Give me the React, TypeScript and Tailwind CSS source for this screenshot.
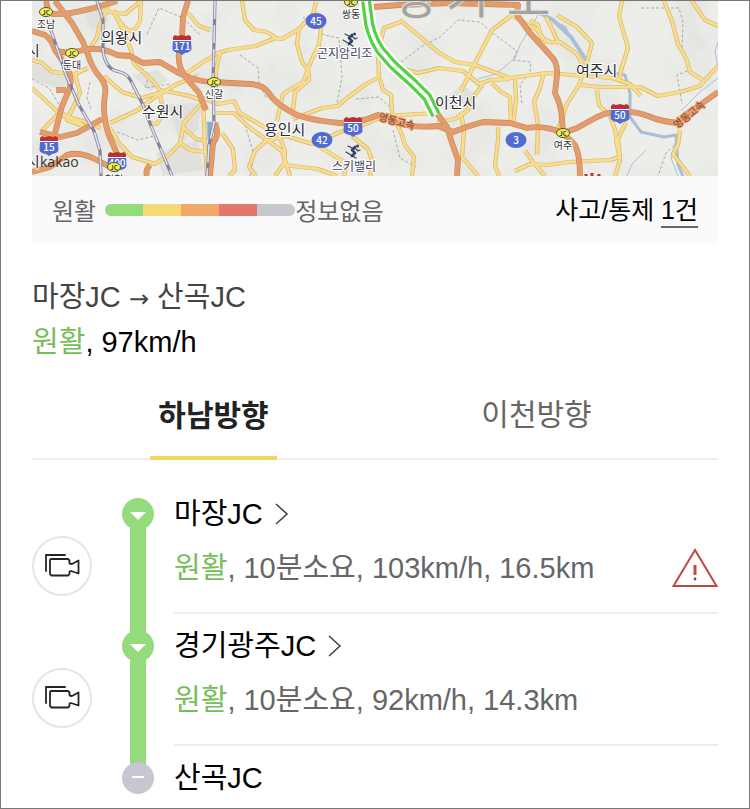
import React from "react";

const HIGHWAYS = [
  "M32 31L45 35Q52 40 55 50L67 67Q73 80 69 90L62 106L55 133",
  "M55 1L72 23L83 42L88 55Q92 68 100 77Q107 85 105 95Q102 112 108 133L118 156",
  "M46 1L49 13Q60 17 97 7L117 1",
  "M55 50Q66 55 83 50Q100 46 117 55L130 56L143 63L160 62L177 72L190 78Q203 82 213 82L250 84Q263 85 268 92Q275 104 297 115Q315 121 340 123Q360 123 378 115Q388 117 397 123Q413 128 438 126L453 132Q468 126 483 122L510 123L527 128Q545 125 563 133L577 128L597 117Q610 111 620 112Q636 111 648 116Q662 122 680 123Q690 110 697 107L718 92",
  "M188 1L183 17L182 37L179 53Q177 67 188 80L199 93L206 110",
  "M56 90L66 90",
  "M40 132L60 137L77 133L102 119",
  "M32 172L50 167L67 155Q80 151 97 160L112 168",
  "M373 7L400 5L450 3L518 5L517 15L530 33L550 55Q558 62 557 75L555 93Q561 105 562 118L563 133L575 145Q580 155 580 176",
  "M436 112L447 127L452 143L458 160L457 176",
  "M215 123Q220 135 213 143L210 176",
  "M150 165Q145 170 147 176",
];

const ROADS = [
  "M109 1L107 10Q98 25 97 38L91 46",
  "M113 10L122 28L131 50L134 64L152 80L160 90L190 96L203 101",
  "M141 1L140 20Q136 33 128 30Q122 26 117 17",
  "M97 10L125 14L141 1",
  "M88 68L75 74L52 72L42 63L32 60",
  "M75 74L80 93L67 120L88 128",
  "M32 88L43 98L62 116L83 121L101 128",
  "M88 128L60 112L41 132",
  "M104 76L122 92L142 98L162 92",
  "M110 123L138 110L155 97L177 84L198 76",
  "M159 92L164 112L157 124L149 123",
  "M110 128L119 143L132 157L155 164L170 154L180 143L184 123L203 101",
  "M203 101L205 145L207 176",
  "M203 98L218 104L234 101L240 113L266 128",
  "M216 113L234 113L250 128L267 140L282 151L290 176",
  "M222 133L233 149L235 170L229 176",
  "M187 73L203 62L218 53L228 50L256 46L275 38L282 39L299 29L313 14L316 2",
  "M242 1L245 20L254 30L267 32L278 39",
  "M188 13L199 26L210 30",
  "M220 53L216 70L216 80",
  "M299 27L297 44L302 62L308 70L303 82L283 94L280 107L277 121",
  "M316 12L321 28L319 45L313 57L308 68L309 80L295 92L293 110",
  "M293 119L322 108L338 106L347 98L366 84L379 77L378 53L384 28L403 21",
  "M263 142L286 136L312 144L340 132L360 126L385 116L436 113",
  "M314 143L336 157L346 163L344 176",
  "M278 133L285 151L284 163L275 176",
  "M284 165L318 169L337 176",
  "M352 136L368 149L373 163L370 176",
  "M268 139L255 151L249 167L256 176",
  "M179 142L190 150L205 152",
  "M184 128L196 139L206 141",
  "M400 20L418 35L438 52L455 62L475 65L510 78L547 73L612 78L630 84L641 96",
  "M380 79L383 90L391 95L392 113L402 135L405 145L414 157L412 176",
  "M401 68L418 73L439 68L463 71L479 84L490 80L510 79",
  "M512 15L492 30L478 57L473 67L461 91",
  "M461 112L464 130L462 157L478 176",
  "M437 122L455 119L468 110L474 96L483 84",
  "M492 83L501 92L510 97L511 126",
  "M515 79L516 100L513 125",
  "M514 17L537 30L546 42L560 42L577 54L584 67",
  "M546 17L553 31L559 44",
  "M557 15L577 27L592 43L587 62L579 85L567 104L558 129",
  "M530 20L538 25L541 38L553 43",
  "M581 85L600 87L640 87L658 96L680 92L700 86L706 79L718 66",
  "M597 90L599 105L610 116L615 129L617 145L620 160L615 176",
  "M622 1L619 16L628 48L622 67L619 80",
  "M664 1L672 21L678 44L686 58L690 72L703 80",
  "M692 1L705 20L718 26",
  "M626 122L618 139L620 157L610 160L569 162L548 165L530 164L515 171",
  "M680 130L678 145L673 154L690 176",
  "M525 151L533 162L545 176",
  "M498 127L498 140L495 165L499 176",
  "M544 72L540 88L534 101L538 125L537 155",
];

const RAILS = [
  "M97 1L103 20L103 50Q105 70 120 72Q128 74 132 83L143 105L151 126L172 176",
  "M48 22L55 42L66 75L79 105L94 131L100 151L101 176",
  "M215 1L213 82L214 123L209 145L207 176",
];

const BORDERS = [
  "M32 79L49 88L60 106M90 82L87 98L92 111",
  "M147 34L159 8L183 18L200 35M138 65L149 75L145 88L170 84",
  "M240 55L258 68L259 82L266 98M245 125L254 155L250 176",
  "M303 17L324 35L339 38L342 77L336 108",
  "M356 99L379 97L391 108M393 130L400 158L416 167",
  "M401 62L421 47L440 37L458 20L480 22L491 32L517 51L513 60L531 62L530 72L520 85L522 105",
  "M641 8L679 8L683 22L682 50L690 70L677 75L682 104",
  "M678 142L666 153L658 176M117 132L138 140L154 136",
];

function Junction({ x, y, label }: { x: number; y: number; label: string }) {
  return (
    <g textAnchor="middle">
      <ellipse cx={x} cy={y} rx="6.5" ry="4.5" fill="#f2ef55" stroke="#504e35" />
      <text x={x} y={y + 2.5} fontSize="6" fontWeight="700" fill="#33322b">JC</text>
      <text x={x} y={y + 16} fontSize="10" fill="#303038" stroke="#fff" strokeWidth="2" paintOrder="stroke">{label}</text>
    </g>
  );
}

function Shield({ x, y, label }: { x: number; y: number; label: string }) {
  return (
    <g>
      <path d={`M${x - 9} ${y - 5}H${x + 9}L${x + 9.5} ${y + 4}Q${x + 9} ${y + 7} ${x + 3} ${y + 8}L${x} ${y + 10}L${x - 3} ${y + 8}Q${x - 9} ${y + 7} ${x - 9.5} ${y + 4}Z`} fill="#526bd0" />
      <path d={`M${x - 9} ${y - 5}V${y - 8}L${x - 7} ${y - 10}L${x - 4} ${y - 9}L${x} ${y - 10}L${x + 4} ${y - 9}L${x + 7} ${y - 10}L${x + 9} ${y - 8}V${y - 5}Z`} fill="#bd3030" />
      <path d={`M${x - 9} ${y - 4.5}H${x + 9}`} stroke="#fff" />
      <text x={x} y={y + 5} textAnchor="middle" fontSize="10" fontWeight="500" fill="#fff">{label}</text>
    </g>
  );
}

function Oval({ x, y, label }: { x: number; y: number; label: string }) {
  return (
    <g>
      <ellipse cx={x} cy={y} rx="10.5" ry="8" fill="#526bd0" />
      <text x={x} y={y + 3.5} textAnchor="middle" fontSize="10" fontWeight="500" fill="#fff">{label}</text>
    </g>
  );
}

function Skier({ x, y }: { x: number; y: number }) {
  return (
    <g transform={`translate(${x} ${y})`} stroke="#354260" fill="none" strokeLinecap="round" strokeLinejoin="round">
      <circle cx="4.5" cy="-5" r="1.5" fill="#354260" stroke="none" />
      <path d="M2 -4L-1 -1L2 2L-1 5" strokeWidth="2.6" />
      <path d="M2 -3L5 0L7 -1M-1 -3L-5 -5" strokeWidth="1.2" />
      <path d="M-7 1L3 7" strokeWidth="1.2" />
    </g>
  );
}

function TrafficMap() {
  return (
    <svg viewBox="32 1 686 175" role="img" aria-label="교통 지도" className="block h-auto w-full font-[Noto_Sans_CJK_KR,sans-serif]">
      <defs>
        <filter id="terrain" x="0" y="0" width="100%" height="100%">
          <feTurbulence type="fractalNoise" baseFrequency="0.018" numOctaves="4" seed="8" />
          <feColorMatrix values="0 0 0 0 .62 0 0 0 0 .63 0 0 0 0 .62 0 0 0 1.6 -.7" />
        </filter>
      </defs>
      <rect x="32" y="1" width="686" height="175" fill="#edeeea" />
      <rect x="32" y="1" width="686" height="175" filter="url(#terrain)" opacity=".45" />
      <path d="M32 64L58 70L75 84L56 88L32 79ZM132 75L158 70L168 80L150 91ZM168 104L202 103L198 130L180 142ZM84 12L104 4L108 22L92 31ZM156 153L198 140L203 170L163 176ZM446 99L462 84L475 94L470 110L449 107Z" fill="#dcdcd9" opacity=".7" />
      <g fill="none" stroke="#a8bfd6" strokeLinejoin="round">
        <path d="M536 11L553 20L571 37L586 60" strokeWidth="4" />
        <path d="M557 23L565 27L572 40" strokeWidth="2" />
        <path d="M612 73L625 75L630 93L630 117L641 132L664 137L676 135L678 165L683 176" strokeWidth="3" />
        <path d="M718 42L715 52L718 66M718 78L700 92L681 111M538 15L520 45L515 58L496 74L478 79M677 136L671 158L678 176M646 150L632 164L627 176" strokeWidth="1" />
        <path d="M207 122L212 122L212 135L208 140Z" fill="#86a9c8" />
      </g>
      <g fill="none" stroke="#aaa9a9" strokeDasharray="3 2">
        {BORDERS.map((d) => <path key={d} d={d} />)}
      </g>
      <g fill="none" strokeLinejoin="round">
        {ROADS.map((d) => <path key={d} d={d} stroke="#d8b663" strokeWidth="4.2" />)}
        {ROADS.map((d) => <path key={d} d={d} stroke="#f8dd90" strokeWidth="2.8" />)}
        {HIGHWAYS.map((d) => <path key={d} d={d} stroke="#ca8658" strokeWidth="5.8" />)}
        {HIGHWAYS.map((d) => <path key={d} d={d} stroke="#e39c6c" strokeWidth="4.6" />)}
        {RAILS.map((d) => <path key={d} d={d} stroke="#85839b" strokeWidth="3.2" />)}
        {RAILS.map((d) => <path key={d} d={d} stroke="#e4e3ec" strokeWidth="1.6" strokeDasharray="18 6" />)}
      </g>
      <g fill="#a3a3a0" fontSize="47" stroke="#e6e6e2" strokeWidth="2" paintOrder="stroke">
        <text x="393" y="14">경</text><text x="446" y="13">기</text><text x="507" y="15">도</text>
      </g>
      <g fill="none" strokeLinejoin="round">
        <path d="M366 1L368 15Q369 33 380 50L393 65L413 83L427 97L436 115" stroke="#fff" strokeWidth="14" />
        <path d="M366 1L368 15Q369 33 380 50L393 65L413 83L427 97L436 115" stroke="#55d145" strokeWidth="10" />
        <path d="M366 1L368 15Q369 33 380 50L393 65L413 83L427 97L436 115" stroke="#fff" strokeWidth="3.5" />
      </g>
      <g fill="#292a32" fontSize="15" stroke="#fff" strokeWidth="2" paintOrder="stroke">
        <text x="101" y="43">의왕시</text>
        <text x="142" y="117">수원시</text>
        <text x="264" y="135">용인시</text>
        <text x="435" y="108">이천시</text>
        <text x="576" y="76">여주시</text>
        <text x="26" y="56">시</text>
        <text x="26" y="167">시</text>
      </g>
      <g fill="#3b4862" fontSize="12" stroke="#fff" strokeWidth="2" paintOrder="stroke">
        <text x="317" y="58">곤지암리조</text>
        <text x="332" y="171">스키밸리</text>
      </g>
      <Junction x={46} y={12} label="조남" />
      <Junction x={72} y={53} label="둔대" />
      <Junction x={214} y={82} label="신갈" />
      <Junction x={351} y={2} label="쌍동" />
      <Junction x={563} y={133} label="여주" />
      <Shield x={182} y={45} label="171" />
      <Shield x={49} y={146} label="15" />
      <Shield x={117} y={162} label="400" />
      <Junction x={114} y={167} label="천천" />
      <Shield x={353} y={127} label="50" />
      <Shield x={620} y={114} label="50" />
      <Oval x={316} y={21} label="45" />
      <Oval x={322} y={140} label="42" />
      <Oval x={516} y={140} label="3" />
      <Skier x={350} y={39} />
      <Skier x={353} y={151} />
      <g fill="#8e4d2d" fontSize="10" fontWeight="500" stroke="#eba476" strokeWidth="2" paintOrder="stroke">
        <text transform="translate(378 120) rotate(15)">영동고속</text>
        <text transform="translate(677 129) rotate(-39)">영동고속</text>
      </g>
      <text x="40" y="167" fontSize="14" fill="#393330" className="font-[Open_Sans,sans-serif]">kakao</text>
      <path d="M586 176V174M592 176V173M599 176V174" stroke="#bd3030" strokeWidth="3" />
    </svg>
  );
}

function Camera() {
  return (
    <button type="button" aria-label="CCTV 보기" className="mt-[38px] flex size-[60px] shrink-0 items-center justify-center rounded-full border-2 border-[#e5e5e5]">
      <svg width="36" height="24" viewBox="0 0 36 24" fill="none" stroke="#252525" strokeWidth="1.8" strokeLinejoin="round" strokeLinecap="round">
        <path d="M2 17V1H21" />
        <path d="M7 5H24L25.5 6.5V9.5L28 10L34.5 6.5V19.5L27 17L25.5 17.5V20L24 21.5H7.5L6 20V6Z" />
      </svg>
    </button>
  );
}

function StopMarker({ end = false }: { end?: boolean }) {
  return (
    <svg width="32" height="32" viewBox="0 0 32 32" className="shrink-0" aria-hidden="true">
      <circle cx="16" cy="16" r="16" fill={end ? "#c7c6d1" : "#93db7c"} />
      {end ? <path d="M10 15H22" stroke="#fff" strokeWidth="2" /> : <path d="M8 14H24L16 22Z" fill="#fff" />}
    </svg>
  );
}

function Warning() {
  return (
    <svg width="46" height="40" viewBox="0 0 46 40" fill="none" role="img" aria-label="주의" className="shrink-0">
      <path d="M23 2L1.5 38H44.5Z" stroke="#bd4a43" strokeWidth="2" />
      <path d="M23 17V27" stroke="#bd4a43" strokeWidth="3" />
      <circle cx="23" cy="31" r="1.4" fill="#654946" />
    </svg>
  );
}

function Segment({ name, info, alert = false }: { name: string; info: string; alert?: boolean }) {
  return (
    <li className="flex h-[132px]">
      <Camera />
      <div className="ml-[30px] flex w-8 shrink-0 flex-col items-center">
        <StopMarker />
        <span className="-my-1 w-4 flex-1 bg-[#93db7c]" />
      </div>
      <div className="ml-5 h-[116px] flex-1 border-b-2 border-[#eee]">
        <a href="#" className="flex items-center gap-3 text-[29px] leading-8 text-black">
          {name}
          <svg width="14" height="22" viewBox="0 0 14 22" fill="none" stroke="#444" strokeWidth="1.6" aria-hidden="true"><path d="M1 1L12 11L1 21" /></svg>
        </a>
        <div className="mt-4 flex h-11 items-center justify-between">
          <p className="whitespace-nowrap text-[29px] leading-8 text-[#666]"><span className="text-[#77bd5a]">원활</span>{info}</p>
          {alert && <Warning />}
        </div>
      </div>
    </li>
  );
}

export default function App() {
  return (
    <main className="min-h-screen border border-[#777] bg-white px-[31px] font-[Liberation_Sans,Noto_Sans_CJK_KR,sans-serif]">
      <TrafficMap />
      <section className="flex h-[68px] items-center justify-between bg-[#fafafa] px-5 text-2xl">
        <div className="flex items-center text-[#666]">
          <span className="pt-[3px]">원활</span>
          <div className="ml-[9px] flex h-3 w-[190px] overflow-hidden rounded-full">
            <span className="flex-1 bg-[#93db7c]" />
            <span className="flex-1 bg-[#f5da76]" />
            <span className="flex-1 bg-[#efa969]" />
            <span className="flex-1 bg-[#e3776c]" />
            <span className="flex-1 bg-[#c8c8cf]" />
          </div>
          <span className="pt-[3px]">정보없음</span>
        </div>
        <p className="pt-0.5 text-[25px] text-black">사고/통제 <a href="#" className="inline-block border-b-2 border-[#666] leading-8">1건</a></p>
      </section>
      <section className="pt-[31px] text-[29px] leading-[45px]">
        <h1 className="text-[#444]">마장JC <span className="font-[DejaVu_Sans,sans-serif] text-2xl leading-8">→</span> 산곡JC</h1>
        <p className="text-black"><span className="text-[#77bd5a]">원활</span>, 97km/h</p>
      </section>
      <div role="tablist" className="mt-[5px] flex h-[90px] border-b-2 border-[#eee] px-5 text-[30px]">
        <div className="flex flex-1 justify-center">
          <button type="button" role="tab" aria-selected="true" className="-mb-0.5 border-b-4 border-[#f0d75f] px-2 pt-1 font-bold text-[#222]">하남방향</button>
        </div>
        <div className="flex flex-1 justify-center">
          <button type="button" role="tab" aria-selected="false" className="px-2 text-[#666]">이천방향</button>
        </div>
      </div>
      <ol className="pt-[38px]">
        <Segment name="마장JC" info=", 10분소요, 103km/h, 16.5km" alert />
        <Segment name="경기광주JC" info=", 10분소요, 92km/h, 14.3km" />
        <li className="flex pl-[90px]">
          <StopMarker end />
          <span className="ml-5 text-[29px] leading-8 text-black">산곡JC</span>
        </li>
      </ol>
    </main>
  );
}
